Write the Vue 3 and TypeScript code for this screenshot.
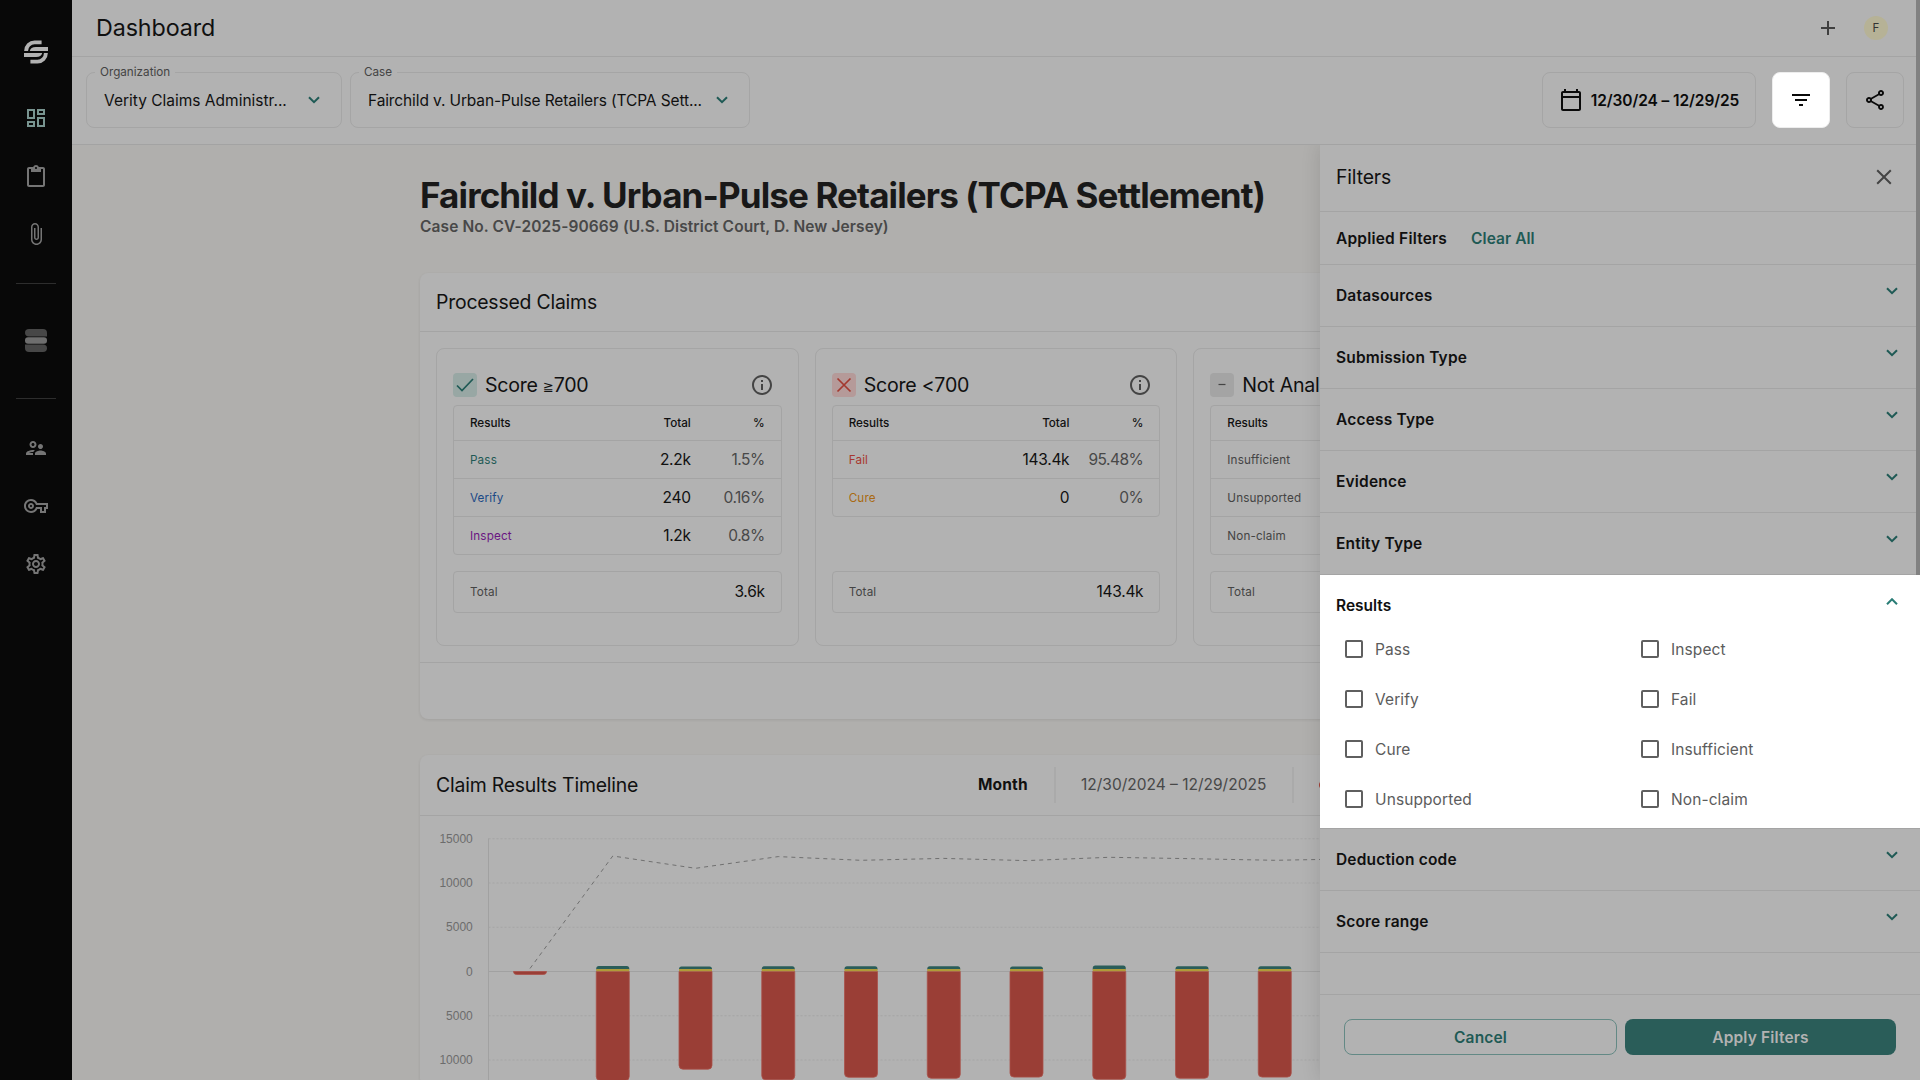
<script setup lang="ts">
interface Row { label: string; tone: string; total?: string; pct?: string }
interface ScoreCard { title: string; sign: string; value: string; icon: 'check' | 'cross' | 'dash'; rows: Row[]; total?: string }

const paths = {
  dashboard: 'M19 5v2h-4V5h4M9 5v6H5V5h4m10 8v6h-4v-6h4M9 17v2H5v-2h4M21 3h-8v6h8V3zM11 3H3v10h8V3zm10 8h-8v10h8V11zm-10 4H3v6h8v-6z',
  clipboard: 'M19 2h-4.18C14.4.84 13.3 0 12 0S9.6.84 9.18 2H5c-1.1 0-2 .9-2 2v16c0 1.1.9 2 2 2h14c1.1 0 2-.9 2-2V4c0-1.1-.9-2-2-2zm-7 0c.55 0 1 .45 1 1s-.45 1-1 1-1-.45-1-1 .45-1 1-1zm7 18H5V4h2v3h10V4h2v16z',
  clip: 'M16.5 6v11.5c0 2.21-1.79 4-4 4s-4-1.79-4-4V5c0-1.38 1.12-2.5 2.5-2.5s2.5 1.12 2.5 2.5v10.5c0 .55-.45 1-1 1s-1-.45-1-1V6H10v9.5c0 1.38 1.12 2.5 2.5 2.5s2.5-1.12 2.5-2.5V5c0-2.21-1.79-4-4-4S7 2.79 7 5v12.5c0 3.04 2.46 5.5 5.5 5.5s5.5-2.46 5.5-5.5V6h-1.5z',
  people: 'M9 12c1.93 0 3.5-1.57 3.5-3.5S10.93 5 9 5 5.5 6.57 5.5 8.5 7.07 12 9 12zm0-5c.83 0 1.5.67 1.5 1.5S9.83 10 9 10s-1.5-.67-1.5-1.5S8.17 7 9 7zm.05 10H4.77c.99-.5 2.7-1 4.23-1 .11 0 .23.01.34.01.34-.73.93-1.33 1.64-1.81-.73-.13-1.42-.2-1.98-.2-2.34 0-7 1.17-7 3.5V19h7v-1.5c0-.17.02-.34.05-.5zm7.45-2.5c-1.84 0-5.5 1.01-5.5 3V19h11v-1.5c0-1.99-3.66-3-5.5-3zm1.21-1.82c.76-.43 1.29-1.24 1.29-2.18C19 9.12 17.88 8 16.5 8S14 9.12 14 10.5c0 .94.53 1.75 1.29 2.18.36.2.77.32 1.21.32s.85-.12 1.21-.32z',
  key: 'M22 19h-6v-4h-2.68c-1.14 2.42-3.6 4-6.32 4-3.86 0-7-3.14-7-7s3.14-7 7-7c2.72 0 5.17 1.58 6.32 4H24v6h-2v4zm-4-2h2v-4h2v-2H11.94l-.23-.67C11.01 8.34 9.11 7 7 7c-2.76 0-5 2.24-5 5s2.24 5 5 5c2.11 0 4.01-1.34 4.71-3.33l.23-.67H18v4zM7 15c-1.65 0-3-1.35-3-3s1.35-3 3-3 3 1.35 3 3-1.35 3-3 3zm0-4c-.55 0-1 .45-1 1s.45 1 1 1 1-.45 1-1-.45-1-1-1z',
  gear: 'M19.43 12.98c.04-.32.07-.64.07-.98 0-.34-.03-.66-.07-.98l2.11-1.65c.19-.15.24-.42.12-.64l-2-3.46c-.09-.16-.26-.25-.44-.25-.06 0-.12.01-.17.03l-2.49 1c-.52-.4-1.08-.73-1.69-.98l-.38-2.65C14.46 2.18 14.25 2 14 2h-4c-.25 0-.46.18-.49.42l-.38 2.65c-.61.25-1.17.59-1.69.98l-2.49-1c-.06-.02-.12-.03-.18-.03-.17 0-.34.09-.43.25l-2 3.46c-.13.22-.07.49.12.64l2.11 1.65c-.04.32-.07.65-.07.98 0 .33.03.66.07.98l-2.11 1.65c-.19.15-.24.42-.12.64l2 3.46c.09.16.26.25.44.25.06 0 .12-.01.17-.03l2.49-1c.52.4 1.08.73 1.69.98l.38 2.65c.03.24.24.42.49.42h4c.25 0 .46-.18.49-.42l.38-2.65c.61-.25 1.17-.59 1.69-.98l2.49 1c.06.02.12.03.18.03.17 0 .34-.09.43-.25l2-3.46c.12-.22.07-.49-.12-.64l-2.11-1.65zm-1.98-1.71c.04.31.05.52.05.73 0 .21-.02.43-.05.73l-.14 1.13.89.7 1.08.84-.7 1.21-1.27-.51-1.04-.42-.9.68c-.43.32-.84.56-1.25.73l-1.06.43-.16 1.13-.2 1.35h-1.4l-.19-1.35-.16-1.13-1.06-.43c-.43-.18-.83-.41-1.23-.71l-.91-.7-1.06.43-1.27.51-.7-1.21 1.08-.84.89-.7-.14-1.13c-.03-.31-.05-.54-.05-.74s.02-.43.05-.73l.14-1.13-.89-.7-1.08-.84.7-1.21 1.27.51 1.04.42.9-.68c.43-.32.84-.56 1.25-.73l1.06-.43.16-1.13.2-1.35h1.39l.19 1.35.16 1.13 1.06.43c.43.18.83.41 1.23.71l.91.7 1.06-.43 1.27-.51.7 1.21-1.07.85-.89.7.14 1.13zM12 8c-2.21 0-4 1.79-4 4s1.79 4 4 4 4-1.79 4-4-1.79-4-4-4zm0 6c-1.1 0-2-.9-2-2s.9-2 2-2 2 .9 2 2-.9 2-2 2z',
  calendar: 'M20 3h-1V1h-2v2H7V1H5v2H4c-1.1 0-2 .9-2 2v16c0 1.1.9 2 2 2h16c1.1 0 2-.9 2-2V5c0-1.1-.9-2-2-2zm0 18H4V10h16v11zm0-13H4V5h16v3z',
  filter: 'M10 18h4v-2h-4v2zM3 6v2h18V6H3zm3 7h12v-2H6v2z',
  share: 'M18 16.08c-.76 0-1.44.3-1.96.77L8.91 12.7c.05-.23.09-.46.09-.7s-.04-.47-.09-.7l7.05-4.11c.54.5 1.25.81 2.04.81 1.66 0 3-1.34 3-3s-1.34-3-3-3-3 1.34-3 3c0 .24.04.47.09.7L8.04 9.81C7.5 9.31 6.79 9 6 9c-1.66 0-3 1.34-3 3s1.34 3 3 3c.79 0 1.5-.31 2.04-.81l7.12 4.16c-.05.21-.08.43-.08.65 0 1.61 1.31 2.92 2.92 2.92s2.92-1.31 2.92-2.92-1.31-2.92-2.92-2.92zM18 4c.55 0 1 .45 1 1s-.45 1-1 1-1-.45-1-1 .45-1 1-1zM6 13c-.55 0-1-.45-1-1s.45-1 1-1 1 .45 1 1-.45 1-1 1zm12 7.02c-.55 0-1-.45-1-1s.45-1 1-1 1 .45 1 1-.45 1-1 1z',
  info: 'M11 7h2v2h-2zm0 4h2v6h-2zm1-9C6.48 2 2 6.48 2 12s4.48 10 10 10 10-4.48 10-10S17.52 2 12 2zm0 18c-4.41 0-8-3.59-8-8s3.59-8 8-8 8 3.59 8 8-3.59 8-8 8z',
}

const cards: ScoreCard[] = [
  {
    title: 'Score', sign: '≧', value: '700', icon: 'check', total: '3.6k',
    rows: [
      { label: 'Pass', tone: 'teal', total: '2.2k', pct: '1.5%' },
      { label: 'Verify', tone: 'blue', total: '240', pct: '0.16%' },
      { label: 'Inspect', tone: 'purple', total: '1.2k', pct: '0.8%' },
    ],
  },
  {
    title: 'Score', sign: '', value: '<700', icon: 'cross', total: '143.4k',
    rows: [
      { label: 'Fail', tone: 'red', total: '143.4k', pct: '95.48%' },
      { label: 'Cure', tone: 'orange', total: '0', pct: '0%' },
    ],
  },
  {
    title: 'Not Analyzed', sign: '', value: '', icon: 'dash',
    rows: [
      { label: 'Insufficient', tone: 'gray' },
      { label: 'Unsupported', tone: 'gray' },
      { label: 'Non-claim', tone: 'gray' },
    ],
  },
]

const before = ['Datasources', 'Submission Type', 'Access Type', 'Evidence', 'Entity Type']
const after = ['Deduction code', 'Score range']
const results = ['Pass', 'Inspect', 'Verify', 'Fail', 'Cure', 'Insufficient', 'Unsupported', 'Non-claim']

// Chart geometry, in pixels of the chart's own area
const ticks = ['15000', '10000', '5000', '0', '5000', '10000']
const step = 44.25
const zero = 155.5
const tickY = (i: number) => zero + (i - 3) * step
const barX = (i: number) => 110 + i * 82.75
const failed = [3, 109, 97.7, 108.3, 105.8, 106.8, 105.6, 107.8, 106.8, 105.6, 105.6]
const passed = [0, 5.4, 5, 5.3, 5.2, 5.2, 4.9, 6, 5.3, 5.3, 5.3]
const trendY = [152.5, 40, 52.3, 40.6, 44.3, 42.4, 44.6, 41.3, 42.7, 44.3, 42.8]
const trend = trendY.map((y, i) => `${barX(i)},${y}`).join(' ')
const failPath = (i: number) => {
  const x = barX(i) - 16.5, h = failed[i], r = Math.min(4, h)
  return `M${x} ${zero}h33v${h - r}q0 ${r} -${r} ${r}h-${33 - 2 * r}q-${r} 0 -${r} -${r}z`
}
const passPath = (i: number) => {
  const x = barX(i) - 16.5, h = passed[i] - 2
  return `M${x} ${zero - 2}v-${h - 2.5}q0 -2.5 2.5 -2.5h28q2.5 0 2.5 2.5v${h - 2.5}z`
}
</script>

<template>
  <div class="app">
    <nav class="side">
      <svg class="logo" viewBox="0 0 24 24" width="24" height="24">
        <g v-for="turn in [0, 180]" :key="turn" :transform="`rotate(${turn} 12 12)`">
          <path d="M17.6 2.4H10.6A8.6 8.6 0 0 0 2.1 11" fill="none" stroke="currentColor" stroke-width="3.9" />
          <path d="M24 7H11.8C8.4 7 6.3 8.6 5.8 11H24z" fill="currentColor" />
        </g>
      </svg>
      <div class="nav-group first">
        <svg class="active" viewBox="0 0 24 24"><path :d="paths.dashboard" /></svg>
        <svg viewBox="0 -1 24 24"><path :d="paths.clipboard" /></svg>
        <svg viewBox="0 0 24 24"><path :d="paths.clip" /></svg>
      </div>
      <div class="stack">
        <svg viewBox="0 0 22 23" width="22" height="23">
          <path d="M4 0h14q4 0 4 4v3.4H4q-4 0-4-3.7 0-3.7 4-3.7z" fill="#474747" />
          <rect y="8.3" width="22" height="6.4" rx="3" fill="#6e6e6e" />
          <path d="M0 15.6h18q4 0 4 3.7 0 3.7-4 3.7H4q-4 0-4-4z" fill="#474747" />
        </svg>
      </div>
      <div class="nav-group">
        <svg viewBox="0 0 24 24"><path :d="paths.people" /></svg>
        <svg viewBox="0 0 24 24"><path :d="paths.key" /></svg>
        <svg viewBox="0 0 24 24"><path :d="paths.gear" /></svg>
      </div>
    </nav>

    <div class="main">
      <header class="top">
        <span class="page-title">Dashboard</span>
        <span class="top-right">
          <svg viewBox="0 0 24 24" width="24" height="24"><path d="M12 5v14M5 12h14" stroke="#3f3f3f" stroke-width="2" fill="none" /></svg>
          <span class="avatar">F</span>
        </span>
      </header>

      <div class="toolbar">
        <div class="select org">
          <span class="select-label">Organization</span>
          <span class="select-value">Verity Claims Administr...</span>
          <svg class="chev" viewBox="0 0 12 8"><path d="M1 1.2l5 5 5-5" /></svg>
        </div>
        <div class="select case">
          <span class="select-label">Case</span>
          <span class="select-value">Fairchild v. Urban-Pulse Retailers (TCPA Sett...</span>
          <svg class="chev" viewBox="0 0 12 8"><path d="M1 1.2l5 5 5-5" /></svg>
        </div>
        <div class="actions">
          <button class="btn date"><svg viewBox="0 0 24 24"><path :d="paths.calendar" /></svg><span>12/30/24 – 12/29/25</span></button>
          <button class="btn square lit"><svg viewBox="0 0 24 24"><path :d="paths.filter" /></svg></button>
          <button class="btn square"><svg viewBox="0 0 24 24"><path :d="paths.share" /></svg></button>
        </div>
      </div>

      <div class="content">
        <h1>Fairchild v. Urban-Pulse Retailers (TCPA Settlement)</h1>
        <p class="case-no">Case No. CV-2025-90669 (U.S. District Court, D. New Jersey)</p>

        <section class="card claims">
          <h2>Processed Claims</h2>
          <div class="score-grid">
            <article v-for="c in cards" :key="c.icon" class="score">
              <div class="score-head">
                <span class="badge" :class="c.icon">
                  <svg v-if="c.icon === 'check'" viewBox="0 0 24 24"><path d="M4 12.5l5 5L20 6" /></svg>
                  <svg v-else-if="c.icon === 'cross'" viewBox="0 0 24 24"><path d="M5.5 5.5l13 13M18.5 5.5l-13 13" /></svg>
                  <svg v-else viewBox="0 0 24 24"><path d="M8.5 11.5h7" /></svg>
                </span>
                <span class="score-title">{{ c.title }} <span v-if="c.sign" class="sign">{{ c.sign }}</span>{{ c.value }}</span>
                <svg class="info" viewBox="0 0 24 24"><path :d="paths.info" /></svg>
              </div>
              <div class="table-space">
                <div class="table">
                  <div class="tr th">
                    <span class="name">Results</span>
                    <template v-if="c.total"><span class="num">Total</span><span class="pct">%</span></template>
                  </div>
                  <div v-for="r in c.rows" :key="r.label" class="tr">
                    <span class="name" :class="r.tone">{{ r.label }}</span><span class="num">{{ r.total }}</span><span class="pct">{{ r.pct }}</span>
                  </div>
                </div>
              </div>
              <div class="sum"><span class="name gray">Total</span><span class="num">{{ c.total }}</span></div>
            </article>
          </div>
          <div class="claims-foot"></div>
        </section>

        <section class="card timeline">
          <div class="timeline-head">
            <h2>Claim Results Timeline</h2>
            <span class="month">Month</span>
            <span class="range">12/30/2024 – 12/29/2025</span>
            <span class="dot"></span>
          </div>
          <svg class="chart" viewBox="0 0 1152 270" width="1152" height="270">
            <g class="grid">
              <line v-for="i in [0, 1, 2, 4, 5]" :key="i" x1="68.5" x2="1136" :y1="tickY(i)" :y2="tickY(i)" />
            </g>
            <path class="axis" d="M68.5 22.5V270M68.5 155.5H1136" />
            <text v-for="(t, i) in ticks" :key="i" x="52.8" :y="tickY(i) + 4" text-anchor="end">{{ t }}</text>
            <g v-for="(f, i) in failed" :key="i">
              <path class="fail" :d="failPath(i)" />
              <template v-if="i > 0">
                <path class="pass" :d="passPath(i)" />
                <rect class="cure" :x="barX(i) - 16.5" :y="zero - 2.5" width="33" height="2.2" />
              </template>
            </g>
            <polyline class="trend" :points="trend" />
          </svg>
        </section>
      </div>
    </div>

    <aside class="drawer">
      <div class="drawer-head">
        <span>Filters</span>
        <svg viewBox="0 0 24 24" width="24" height="24"><path d="M5.2 5.2l13.6 13.6M18.8 5.2L5.2 18.8" stroke="#444" stroke-width="2" fill="none" /></svg>
      </div>
      <div class="applied"><span>Applied Filters</span><a>Clear All</a></div>
      <div v-for="s in before" :key="s" class="section">
        <span>{{ s }}</span><svg class="chev" viewBox="0 0 12 8"><path d="M1 1.2l5 5 5-5" /></svg>
      </div>
      <div class="open">
        <div class="section-head">
          <span>Results</span><svg class="chev" viewBox="0 0 12 8"><path d="M1 6.2l5-5 5 5" /></svg>
        </div>
        <div class="checks">
          <label v-for="r in results" :key="r"><i class="box"></i><span>{{ r }}</span></label>
        </div>
      </div>
      <div v-for="s in after" :key="s" class="section">
        <span>{{ s }}</span><svg class="chev" viewBox="0 0 12 8"><path d="M1 1.2l5 5 5-5" /></svg>
      </div>
      <div class="drawer-foot">
        <button class="cancel">Cancel</button>
        <button class="apply">Apply Filters</button>
      </div>
    </aside>
    <div class="scrollbar"></div>
  </div>
</template>

<style>
html, body { margin: 0; overflow: hidden; background: #b0afad; }
</style>

<style scoped>
* { box-sizing: border-box; }
.app { position: relative; display: flex; width: 1920px; height: 1080px; overflow: hidden; font: 400 15.5px/20px Inter, "Liberation Sans", sans-serif; color: #101010; background: #b0afad; }

.side { flex: none; width: 72px; background: #080808; display: flex; flex-direction: column; align-items: center; padding-top: 40px; color: #b2b2b2; }
.logo { flex: none; }
.nav-group { display: flex; flex-direction: column; gap: 34px; padding-top: 37px; }
.nav-group.first { padding: 42px 0 37px; }
.nav-group svg { width: 24px; height: 24px; fill: #757575; }
.nav-group svg.active { fill: #789490; }
.stack { width: 40px; height: 116px; padding-bottom: 1px; border: solid #2d2d2d; border-width: 1px 0; display: flex; align-items: center; justify-content: center; }

.main { flex: 1; min-width: 0; display: flex; flex-direction: column; }
.top { flex: none; height: 57px; background: #b2b2b2; border-bottom: 1px solid #a4a4a4; display: flex; align-items: center; justify-content: space-between; padding: 0 32px 0 24px; }
.page-title { font-size: 23.3px; letter-spacing: -.12px; }
.top-right { display: flex; align-items: center; gap: 24px; }
.avatar { width: 24px; height: 24px; border-radius: 50%; background: #b6b296; font-size: 11.5px; line-height: 24px; text-align: center; color: #333; }

.toolbar { flex: none; height: 88px; background: #b2b2b2; border-bottom: 1px solid #a3a3a3; display: flex; align-items: flex-start; gap: 8px; padding: 15px 16px 0 14px; }
.select { position: relative; height: 56px; border: 1px solid #a5a5a5; border-radius: 8px; display: flex; align-items: center; padding: 0 21px 0 17px; justify-content: space-between; white-space: nowrap; }
.select-value, .date span { padding-top: 1px; }
.org { width: 256px; }
.case { width: 400px; }
.case .select-value { letter-spacing: -.12px; }
.select-label { position: absolute; left: 8px; top: -9px; padding: 0 5px; background: #b2b2b2; font-size: 11.7px; line-height: 16px; color: #444; }
.chev { width: 12px; height: 8px; fill: none; stroke: #1f5a55; stroke-width: 2; }
.actions { margin-left: auto; display: flex; gap: 16px; }
.btn { font: inherit; height: 56px; border: 1px solid #a5a5a5; border-radius: 8px; background: #b2b2b2; display: flex; align-items: center; justify-content: center; padding: 0; color: #0a0a0a; }
.btn svg { width: 24px; height: 24px; fill: #0a0a0a; }
.date { width: 214px; gap: 8px; font-weight: 600; letter-spacing: -.1px; }
.square { width: 58px; }
.lit { background: #fff; border-color: #ededed; }

.content { align-self: center; width: 1152px; flex: 1; min-height: 0; display: flex; flex-direction: column; }
h1 { margin: 31px 0 0; font-size: 35px; line-height: 38px; font-weight: 700; letter-spacing: -.88px; color: #181818; white-space: nowrap; }
.case-no { margin: 3px 0 36px; font-weight: 600; letter-spacing: .1px; color: #484848; }
.card { flex: none; background: #b2b2b2; border-radius: 8px; box-shadow: 0 1px 3px rgba(0, 0, 0, .09); }
h2 { margin: 0; font-size: 19.4px; font-weight: 400; letter-spacing: -.2px; }
.claims { height: 446px; margin-bottom: 36px; }
.claims h2 { height: 59px; line-height: 58px; padding-left: 16px; border-bottom: 1px solid #a4a4a4; }
.score-grid { display: grid; grid-template-columns: repeat(3, 1fr); gap: 16px; padding: 16px; }
.score { height: 298px; border: 1px solid #a5a5a5; border-radius: 8px; padding: 24px 16px 0; }
.score-head { display: flex; align-items: center; height: 24px; padding-right: 8px; }
.badge { width: 24px; height: 24px; border-radius: 4px; }
.badge svg { display: block; fill: none; stroke-width: 1.7; }
.check { background: #98a7a4; stroke: #1f5a55; }
.cross { background: #b59a99; stroke: #a3392f; }
.dash { background: #a4a4a4; stroke: #444; }
.dash svg { stroke-width: 1.2; }
.score-title { margin-left: 8px; font-size: 19.6px; letter-spacing: -.25px; white-space: pre; }
.sign { font: 13px "DejaVu Sans", sans-serif; line-height: 10px; vertical-align: 1px; }
.info { width: 24px; height: 24px; margin-left: auto; fill: #444; }
.table-space { height: 166px; margin-top: 8px; }
.table { border: 1px solid #a4a4a4; border-radius: 4px; }
.tr { display: flex; align-items: center; height: 38px; padding: 0 16px; border-top: 1px solid #a4a4a4; }
.th { height: 34px; border-top: 0; font-weight: 500; }
.name { flex: 1; font-size: 11.7px; letter-spacing: .15px; }
.num { text-align: right; letter-spacing: -.3px; }
.pct { width: 74px; text-align: right; color: #484848; letter-spacing: -.5px; }
.th .num, .th .pct { font-size: 11.7px; letter-spacing: -.05px; color: inherit; }
.th .name { letter-spacing: -.05px; }
.teal { color: #1f5a55; }
.blue { color: #1c4a87; }
.purple { color: #6a1682; }
.red { color: #a8372f; }
.orange { color: #a96a12; }
.gray { color: #444; }
.sum { display: flex; align-items: center; height: 42px; padding: 0 16px; border: 1px solid #a4a4a4; border-radius: 4px; }
.claims-foot { border-top: 1px solid #a4a4a4; }

.timeline-head { height: 61px; display: flex; align-items: center; padding-left: 16px; border-bottom: 1px solid #a4a4a4; }
.timeline-head h2 { width: 542px; }
.month { width: 78px; line-height: 36px; border-right: 2px solid #aaa; font-weight: 700; letter-spacing: .15px; }
.range { width: 238px; line-height: 36px; padding-left: 25px; border-right: 2px solid #aaa; color: #484848; }
.dot { width: 10px; height: 10px; margin-left: 25px; border-radius: 50%; background: #a3392f; }
.chart { display: block; }
.chart text { font: 12px "Liberation Sans", Arial, sans-serif; fill: #6c6c6c; }
.grid line { stroke: #a5a5a5; stroke-dasharray: 2 2; }
.axis { stroke: #a1a1a1; fill: none; }
.fail { fill: #9a3e36; stroke: #a9524a; stroke-width: .8; }
.cure { fill: #b09b39; }
.pass { fill: #2a5d59; }
.trend { fill: none; stroke: #707070; stroke-dasharray: 4 4; }

.drawer { position: absolute; left: 1320px; top: 145px; width: 600px; height: 935px; background: #b2b2b2; box-shadow: 0 0 18px rgba(0, 0, 0, .13); clip-path: inset(0 0 0 -30px); display: flex; flex-direction: column; font-weight: 600; }
.drawer-head { height: 67px; border-bottom: 1px solid #a4a4a4; display: flex; align-items: center; justify-content: space-between; padding: 0 24px 2px 16px; font-size: 19.4px; font-weight: 400; letter-spacing: -.15px; }
.applied { height: 53px; border-bottom: 1px solid #a4a4a4; display: flex; align-items: center; gap: 24px; padding: 1px 0 0 16px; letter-spacing: .2px; }
.applied a { color: #1f5a55; letter-spacing: .05px; }
.section { height: 62px; border-bottom: 1px solid #a4a4a4; display: flex; justify-content: space-between; padding: 21px 22px 0 16px; letter-spacing: .18px; }
.section .chev { margin-top: 1px; }
.open { height: 254px; background: #fff; border-bottom: 1px solid #a4a4a4; }
.open .chev { margin-top: 2px; stroke: #2a7d76; }
.section-head { height: 49px; display: flex; justify-content: space-between; padding: 21px 22px 0 16px; }
.checks { display: grid; grid-template-columns: 296px 1fr; grid-auto-rows: 50px; padding-left: 25px; font-weight: 400; color: #5c5c5c; letter-spacing: .1px; }
.checks label { display: flex; align-items: center; gap: 12px; }
.checks span { padding-top: 1px; }
.box { width: 18px; height: 18px; border: 2px solid #5f5f5f; border-radius: 2px; }
.drawer-foot { margin-top: auto; height: 86px; border-top: 1px solid #a4a4a4; display: flex; gap: 8px; padding: 24px 24px 0; }
.drawer-foot button { flex: 1; height: 36px; border-radius: 8px; font: inherit; letter-spacing: .15px; padding: 1px 0 0; }
.cancel { border: 1px solid #638985; background: none; color: #1f5a55; }
.apply { border: 0; background: #2a5d59; color: #b2b2b2; }
.scrollbar { position: absolute; right: 0; top: 0; width: 4px; height: 575px; background: #818181; }
</style>
